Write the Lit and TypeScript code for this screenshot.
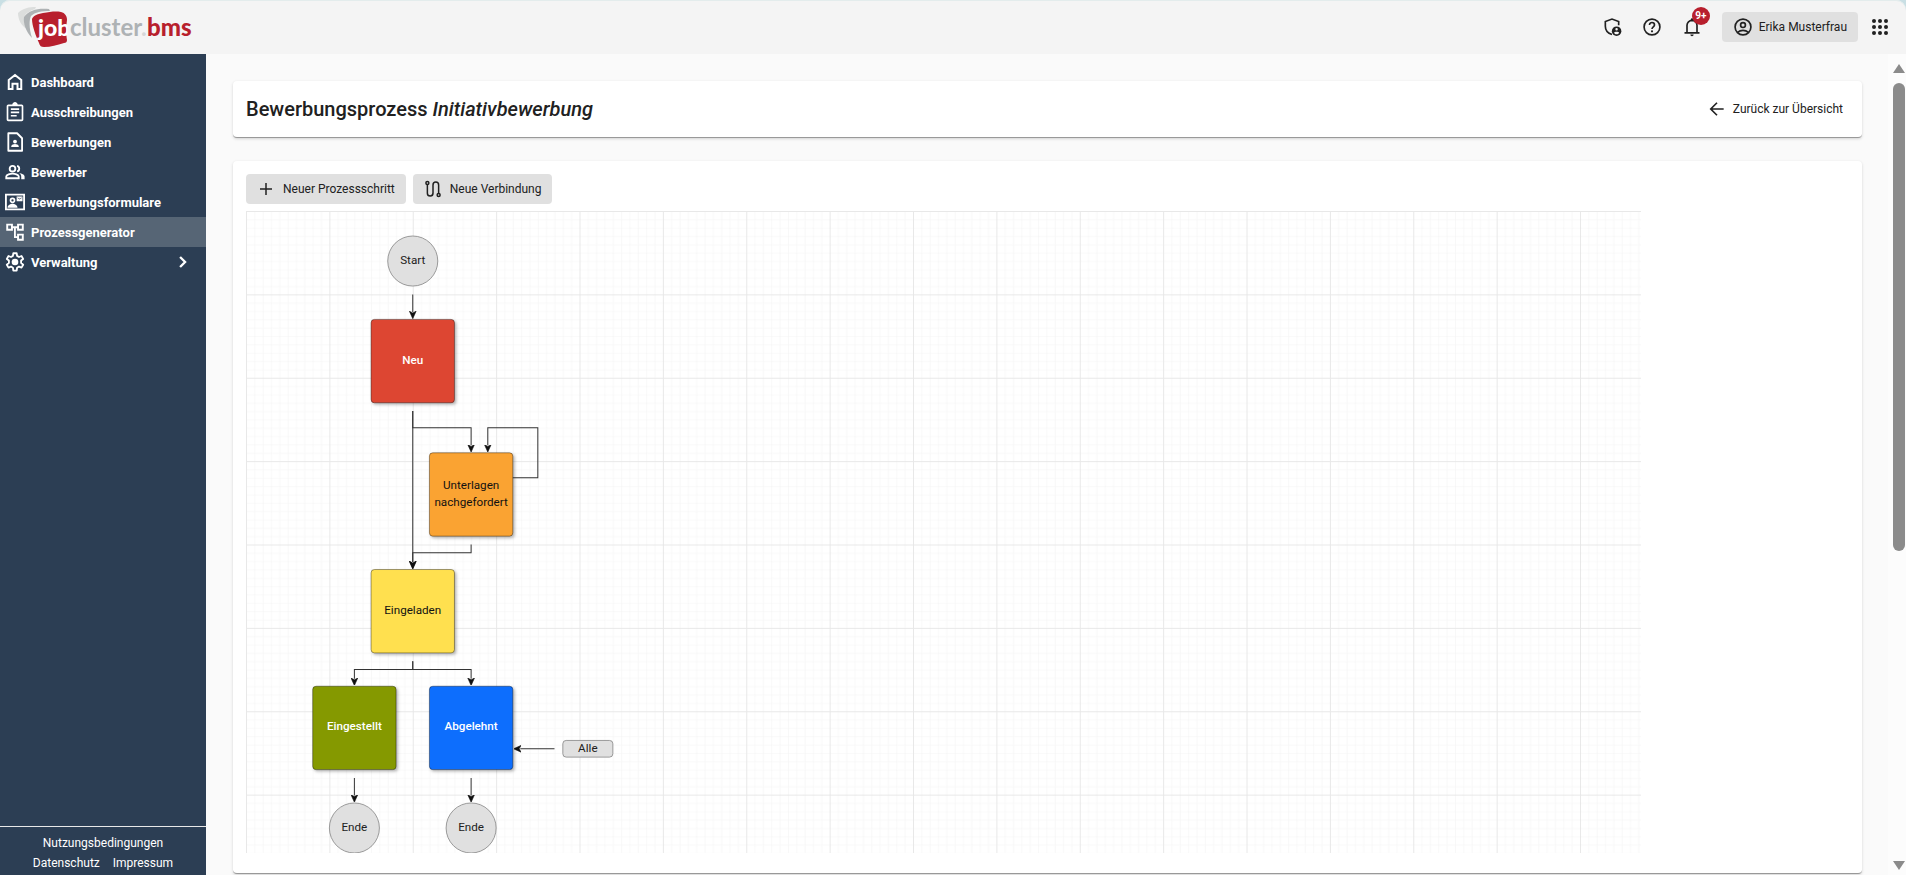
import { LitElement, html, svg, css } from "lit";
import { customElement, property } from "lit/decorators.js";

const ICONS: Record<string, any> = {
  home: svg`<path fill="none" stroke="currentColor" stroke-width="2.400" d="M4.500 9.500L12 3.500l7.500 6V20.500H15v-6.500H9v6.500H4.500z"/>`,
  assignment: svg`<path fill-rule="evenodd" d="M20 3h-4.680C14.900 1.300 13.500 0 12 0S9.100 1.300 8.680 3H4C2.900 3 2 3.900 2 5v16c0 1.100.9 2 2 2h16c1.100 0 2-.9 2-2V5c0-1.100-.9-2-2-2zm0 18H4V5h16v16zM7 15.500h7v2H7zm0-4h10v2H7zm0-4h10v2H7z"/>`,
  contactPage: svg`<path fill="none" stroke="currentColor" stroke-width="2.200" stroke-linejoin="round" d="M4 1.500h10.500L20.500 7.500V22.500H4z"/><circle cx="12" cy="11.500" r="2.300"/><path d="M7.500 18v-1c0-1.800 3-2.600 4.500-2.600s4.500.8 4.500 2.600v1z"/>`,
  group: svg`<g fill="none" stroke="currentColor" stroke-width="2.200"><circle cx="9" cy="8" r="3.400"/><path d="M1.500 19.500v-2C1.500 15 6.500 14 9 14s7.500 1 7.500 3.500v2zM14.500 4.700a3.400 3.400 0 0 1 0 6.600"/></g><path d="M17 13.300c2.700.5 6.500 1.700 6.500 4.200V20.600h-4v-3c0-1.800-1-3.200-2.500-4.300z"/>`,
  contactMail: svg`<path fill="none" stroke="currentColor" stroke-width="2.200" d="M1.100 3.100h21.800v17.800H1.100z"/><circle fill="none" stroke="currentColor" stroke-width="2" cx="9" cy="10" r="2.400"/><path d="M3 19c0-3.400 4-4.800 6-4.800s6 1.400 6 4.800z"/><path fill-rule="evenodd" d="M14 5.500h7v5.500h-7zm1 1v.8l2.500 1.700L20 7.300v-.8l-2.500 1.600z"/>`,
  tree: svg`<path fill-rule="evenodd" d="M22.500 10.500V2h-8v3.200h-5V2h-8v8.500h8v-3h1.300v11.700h3.700v3.300h8v-8.500h-8v3h-1.500V7.500h1.500v3zM7.200 8.200H3.800V4.300h3.400zm9.600 8.100h3.400v3.900h-3.400zm0-12h3.400v3.900h-3.400z"/>`,
  settings: svg`<path fill="none" stroke="currentColor" stroke-width="2.200" stroke-linejoin="round" d="M10 1.500h4l.5 3.200 2.300 1.300 3-1.200 2 3.500-2.500 2v2.800l2.500 2.200-2 3.500-3-1.300-2.300 1.400-.5 3.400h-4l-.5-3.400-2.300-1.400-3 1.300-2-3.500 2.500-2.200v-2.800l-2.500-2 2-3.500 3 1.200 2.300-1.300z"/><circle cx="12" cy="12" r="4"/>`,
  chevron: svg`<path fill="none" stroke="currentColor" stroke-width="2.800" d="M8.500 6L14.500 12l-6 6"/>`,
  shield: svg`<path fill="none" stroke="currentColor" stroke-width="2" d="M12 21c-4.800-1.500-8-5.500-8-10V5.500L12 2.500l8 3V10"/><circle cx="17.500" cy="17" r="5.700"/><path fill="#f4f4f4" d="M17.500 13.200a1.500 1.500 0 1 1 0 3 1.500 1.500 0 0 1 0-3zM14.500 18.800c.5-1.300 5.500-1.300 6 0-.7 1.200-1.700 1.800-3 1.800s-2.300-.6-3-1.800z"/>`,
  help: svg`<circle fill="none" stroke="currentColor" stroke-width="2" cx="12" cy="12" r="9.500"/><path fill="none" stroke="currentColor" stroke-width="2" d="M9 9.500c0-4 6-3.800 6 0 0 2.200-3 2.600-3 5"/><circle cx="12" cy="17.200" r="1.300"/>`,
  bell: svg`<path fill="none" stroke="currentColor" stroke-width="2" d="M3 19h18M6 19V10a6 6 0 0 1 12 0v9"/><path d="M10 21h4a2 2 0 0 1-4 0zM10.500 5V3a1.500 1.500 0 0 1 3 0V5z"/>`,
  account: svg`<g fill="none" stroke="currentColor" stroke-width="2"><circle cx="12" cy="12" r="9.500"/><circle cx="12" cy="9.700" r="2.900"/><path d="M5.500 18.500c3.800-3.300 9.200-3.300 13 0"/></g>`,
  apps: svg`<g>${[4, 12, 20].map((y) => [4, 12, 20].map((x) => svg`<circle cx=${x} cy=${y} r="2.700"/>`))}</g>`,
  back: svg`<path fill="none" stroke="currentColor" stroke-width="2" d="M20 12H5M12 4.500L4.500 12l7.500 7.500"/>`,
  plus: svg`<path fill="none" stroke="currentColor" stroke-width="2" d="M12 4v16M4 12h16"/>`,
  route: svg`<g fill="none" stroke="currentColor" stroke-width="2"><circle cx="4.500" cy="4" r="2"/><circle cx="19.500" cy="20" r="2"/><path d="M4.500 6V17.500a3.700 3.700 0 0 0 7.500 0V6.500a3.700 3.700 0 0 1 7.500 0V18"/></g>`,
};

@customElement("app-icon")
class AppIcon extends LitElement {
  @property() name = "";
  static styles = css`
    :host { display: block; flex: none; width: 20px; height: 20px; }
    svg { display: block; width: 100%; height: 100%; fill: currentColor; }
  `;
  render() {
    return html`<svg viewBox="0 0 24 24" aria-hidden="true">${ICONS[this.name]}</svg>`;
  }
}

@customElement("brand-logo")
class BrandLogo extends LitElement {
  static styles = css`
    :host { display: block; }
    svg { display: block; width: 180px; height: 44px; }
    text { font: 700 24px Lato, sans-serif; }
    .white { fill: #fff; font-size: 23px; font-weight: 900; }
    .grey { fill: #aeb2b4; }
    .pale { fill: #d5d7d8; }
    .red { fill: #b81f2d; font-weight: 900; }
  `;
  render() {
    return html`<svg viewBox="0 0 180 44" role="img" aria-label="jobcluster.bms">
      <defs><clipPath id="box"><path d="M14 0h35.500v44H14z"/></clipPath></defs>
      <path fill="#dcdedd" d="M0 8C5 3 11 2 18 2l-1 2C12 6 7 8 6 13c0 4 1 7 3 11C3 21 0 14 0 8z"/>
      <path fill="#aeb2b4" d="M6 12C11 5 20 3 31 4l1 2c-8 0-15 1-19 5-2 4-2 12 1 22C8 27 5 18 6 12z"/>
      <path fill="#b81f2d" d="M14 14c1-3 5-5 11-6 7-1 12-2 18-1 4 1 6 4 6 8-1 7-1 15 0 20 0 2-1 3-3 3-7 2-13 4-20 4-3 0-4-1-5-4-3-7-7-17-7-24z"/>
      <g clip-path="url(#box)"><text class="white" x="20" y="31">job</text></g>
      <text class="grey" x="52" y="31">cluster</text>
      <text class="pale" x="123" y="31">.</text>
      <text class="red" x="129" y="31">bms</text>
    </svg>`;
  }
}

interface Step { x: number; y: number; lines: string[]; fill: string; light?: boolean; }

const STEPS: Step[] = [
  { x: 150, y: 130, lines: ["Neu"], fill: "#dd4632", light: true },
  { x: 220, y: 290, lines: ["Unterlagen", "nachgefordert"], fill: "#faa332" },
  { x: 150, y: 430, lines: ["Eingeladen"], fill: "#ffe04f" },
  { x: 80, y: 570, lines: ["Eingestellt"], fill: "#859900", light: true },
  { x: 220, y: 570, lines: ["Abgelehnt"], fill: "#0d6efd", light: true },
];
const TERMINALS = [
  { x: 200, y: 60, label: "Start" },
  { x: 130, y: 740, label: "Ende" },
  { x: 270, y: 740, label: "Ende" },
];
const EDGES = [
  "M200 100V121",
  "M200 240V421",
  "M200 240V260H270V281",
  "M320 320H350V260H290V281",
  "M270 400V410H200V421",
  "M200 540V550H130V561",
  "M200 540V550H270V561",
  "M130 680V701",
  "M270 680V701",
  "M370 645H329",
];

@customElement("process-diagram")
class ProcessDiagram extends LitElement {
  static styles = css`
    :host { display: block; overflow: hidden; }
    svg { display: block; width: 1395px; height: 642px; }
    text { font: 400 14px Roboto, sans-serif; text-anchor: middle; fill: #212121; }
    .light { fill: #fff; font-weight: 500; }
    .dark { fill: #111; }
    .edge { fill: none; stroke: #333; stroke-width: 1.200; }
    .step { stroke: #000; stroke-opacity: .45; filter: drop-shadow(2px 2px 2px rgba(0, 0, 0, .3)); }
    .terminal { fill: #e0e0e0; stroke: #888; }
  `;
  render() {
    return html`<svg viewBox="0 0 1674 770" preserveAspectRatio="xMinYMin slice" role="img" aria-label="Bewerbungsprozess">
      <defs>
        <pattern id="minor" width="10" height="10" patternUnits="userSpaceOnUse">
          <path d="M10 0H0V10" fill="none" stroke="#f3f3f3" stroke-width="1.200"/>
        </pattern>
        <pattern id="major" width="100" height="100" patternUnits="userSpaceOnUse">
          <rect width="100" height="100" fill="url(#minor)"/>
          <path d="M100 0H0V100" fill="none" stroke="#e8e8e8" stroke-width="2.400"/>
        </pattern>
        <marker id="arrow" viewBox="0 0 10 10" refX="1" refY="5" markerWidth="9" markerHeight="9" markerUnits="userSpaceOnUse" orient="auto">
          <path d="M0 0.500L10 5L0 9.500L2.500 5z" fill="#111" stroke="#111" stroke-width=".8"/>
        </marker>
      </defs>
      <rect width="1674" height="770" fill="url(#major)"/>
      ${STEPS.map((s) => svg`
        <rect class="step" x=${s.x} y=${s.y} width="100" height="100" rx="4" fill=${s.fill}></rect>
        ${s.lines.map((l, i) => svg`<text class=${s.light ? "light" : "dark"} x=${s.x + 50} y=${s.y + 53 - (s.lines.length - 1) * 10 + i * 21}>${l}</text>`)}
      `)}
      ${EDGES.map((d) => svg`<path class="edge" d=${d} marker-end="url(#arrow)"></path>`)}
      ${TERMINALS.map((t) => svg`
        <circle class="terminal" cx=${t.x} cy=${t.y} r="30"></circle>
        <text x=${t.x} y=${t.y + 4}>${t.label}</text>
      `)}
      <rect class="terminal" x="380" y="635" width="60" height="20" rx="4"/>
      <text x="410" y="649">Alle</text>
    </svg>`;
  }
}

const NAV = [
  { icon: "home", label: "Dashboard" },
  { icon: "assignment", label: "Ausschreibungen" },
  { icon: "contactPage", label: "Bewerbungen" },
  { icon: "group", label: "Bewerber" },
  { icon: "contactMail", label: "Bewerbungsformulare" },
  { icon: "tree", label: "Prozessgenerator", active: true },
  { icon: "settings", label: "Verwaltung", more: true },
];

@customElement("app-root")
class AppRoot extends LitElement {
  static styles = css`
    :host {
      display: flex; flex-direction: column; height: 100vh; overflow: hidden;
      background: #c9dfe4; color: #212121;
      font: 400 12px/18px Roboto, sans-serif;
    }
    * { box-sizing: border-box; }
    button { border: 0; font: inherit; color: inherit; background: none; padding: 0; cursor: pointer; }
    a { color: inherit; text-decoration: none; }
    header {
      flex: none; display: flex; align-items: center; justify-content: space-between;
      height: 54px; padding: 0 16px 0 18px; background: #f4f4f4; border-radius: 10px 10px 0 0;
      box-shadow: inset 0 1px #e3ecec;
    }
    .tools { display: flex; align-items: center; gap: 20px; }
    .tool { position: relative; }
    .badge {
      position: absolute; left: 10px; top: -10px; width: 18px; height: 18px; border-radius: 9px;
      background: #b81f2d; color: #fff; font-size: 10px; font-weight: 700; line-height: 18px; text-align: center;
    }
    .btn {
      display: flex; align-items: center; gap: 8px; height: 30px; padding: 0 11px;
      border-radius: 4px; background: #e0e0e0;
    }
    .tools .btn { gap: 6px; }
    .launcher app-icon { width: 18px; height: 18px; }
    .launcher { margin: 0 1px 0 -7px; }
    .body { flex: 1; min-height: 0; display: flex; background: #fafafa; }
    aside {
      flex: none; width: 206px; display: flex; flex-direction: column; justify-content: space-between;
      background: #2c3e54; color: #fff;
    }
    nav { padding-top: 13px; }
    .item {
      display: flex; align-items: center; gap: 6px; height: 30px; padding: 0 13px 0 5px;
      font-size: 13px; font-weight: 700;
    }
    .item.active { background: #566575; }
    .label { flex: 1; padding-top: 2px; }
    .legal {
      display: flex; flex-wrap: wrap; justify-content: center; column-gap: 13px;
      padding: 6px 20px 2px; border-top: 1px solid #e8e8e8; line-height: 20px;
    }
    main { flex: 1; min-width: 0; padding: 27px 26px 0 27px; overflow: hidden; }
    .card {
      background: #fff; border-radius: 4px; margin-bottom: 23px;
      border-bottom: 1px solid #999; box-shadow: 0 1px 3px rgba(0, 0, 0, .16);
    }
    .title { display: flex; align-items: center; justify-content: space-between; height: 57px; padding: 0 19px 0 13px; }
    h1 { margin: 0; font-size: 20px; line-height: 28px; font-weight: 500; }
    .back { display: flex; align-items: center; gap: 6px; }
    .work { padding: 13px 13px 20px; }
    .actions { display: flex; gap: 7px; margin-bottom: 7px; }
    .actions app-icon { width: 18px; height: 18px; }
    .scroll {
      flex: none; width: 18px; display: flex; flex-direction: column; align-items: center;
      padding: 10px 0 5px 3px; background: #fcfcfc;
    }
    .arrow { width: 12px; height: 9px; fill: #8b8b8b; }
    .track { flex: 1; width: 12px; padding: 10px 0; }
    .thumb { height: 61%; border-radius: 6px; background: #8b8b8b; }
  `;
  render() {
    return html`
      <header>
        <brand-logo></brand-logo>
        <div class="tools">
          <button class="tool" aria-label="Datenschutz"><app-icon name="shield"></app-icon></button>
          <button class="tool" aria-label="Hilfe"><app-icon name="help"></app-icon></button>
          <button class="tool" aria-label="Benachrichtigungen"><app-icon name="bell"></app-icon><span class="badge">9+</span></button>
          <button class="btn"><app-icon name="account"></app-icon>Erika Musterfrau</button>
          <button class="launcher" aria-label="Anwendungen"><app-icon name="apps"></app-icon></button>
        </div>
      </header>
      <div class="body">
        <aside>
          <nav>
            ${NAV.map((n) => html`<a href="#" class="item ${n.active ? "active" : ""}">
              <app-icon name=${n.icon}></app-icon><span class="label">${n.label}</span>
              ${n.more ? html`<app-icon name="chevron"></app-icon>` : ""}
            </a>`)}
          </nav>
          <div class="legal">
            <a href="#">Nutzungsbedingungen</a><a href="#">Datenschutz</a><a href="#">Impressum</a>
          </div>
        </aside>
        <main>
          <section class="card title">
            <h1>Bewerbungsprozess <em>Initiativbewerbung</em></h1>
            <a class="back" href="#"><app-icon name="back"></app-icon>Zurück zur Übersicht</a>
          </section>
          <section class="card work">
            <div class="actions">
              <button class="btn"><app-icon name="plus"></app-icon>Neuer Prozessschritt</button>
              <button class="btn"><app-icon name="route"></app-icon>Neue Verbindung</button>
            </div>
            <process-diagram></process-diagram>
          </section>
        </main>
        <div class="scroll" aria-hidden="true">
          <svg class="arrow" viewBox="0 0 12 9"><path d="M6 0l6 9H0z"/></svg>
          <div class="track"><div class="thumb"></div></div>
          <svg class="arrow" viewBox="0 0 12 9"><path d="M0 0h12L6 9z"/></svg>
        </div>
      </div>
    `;
  }
}
